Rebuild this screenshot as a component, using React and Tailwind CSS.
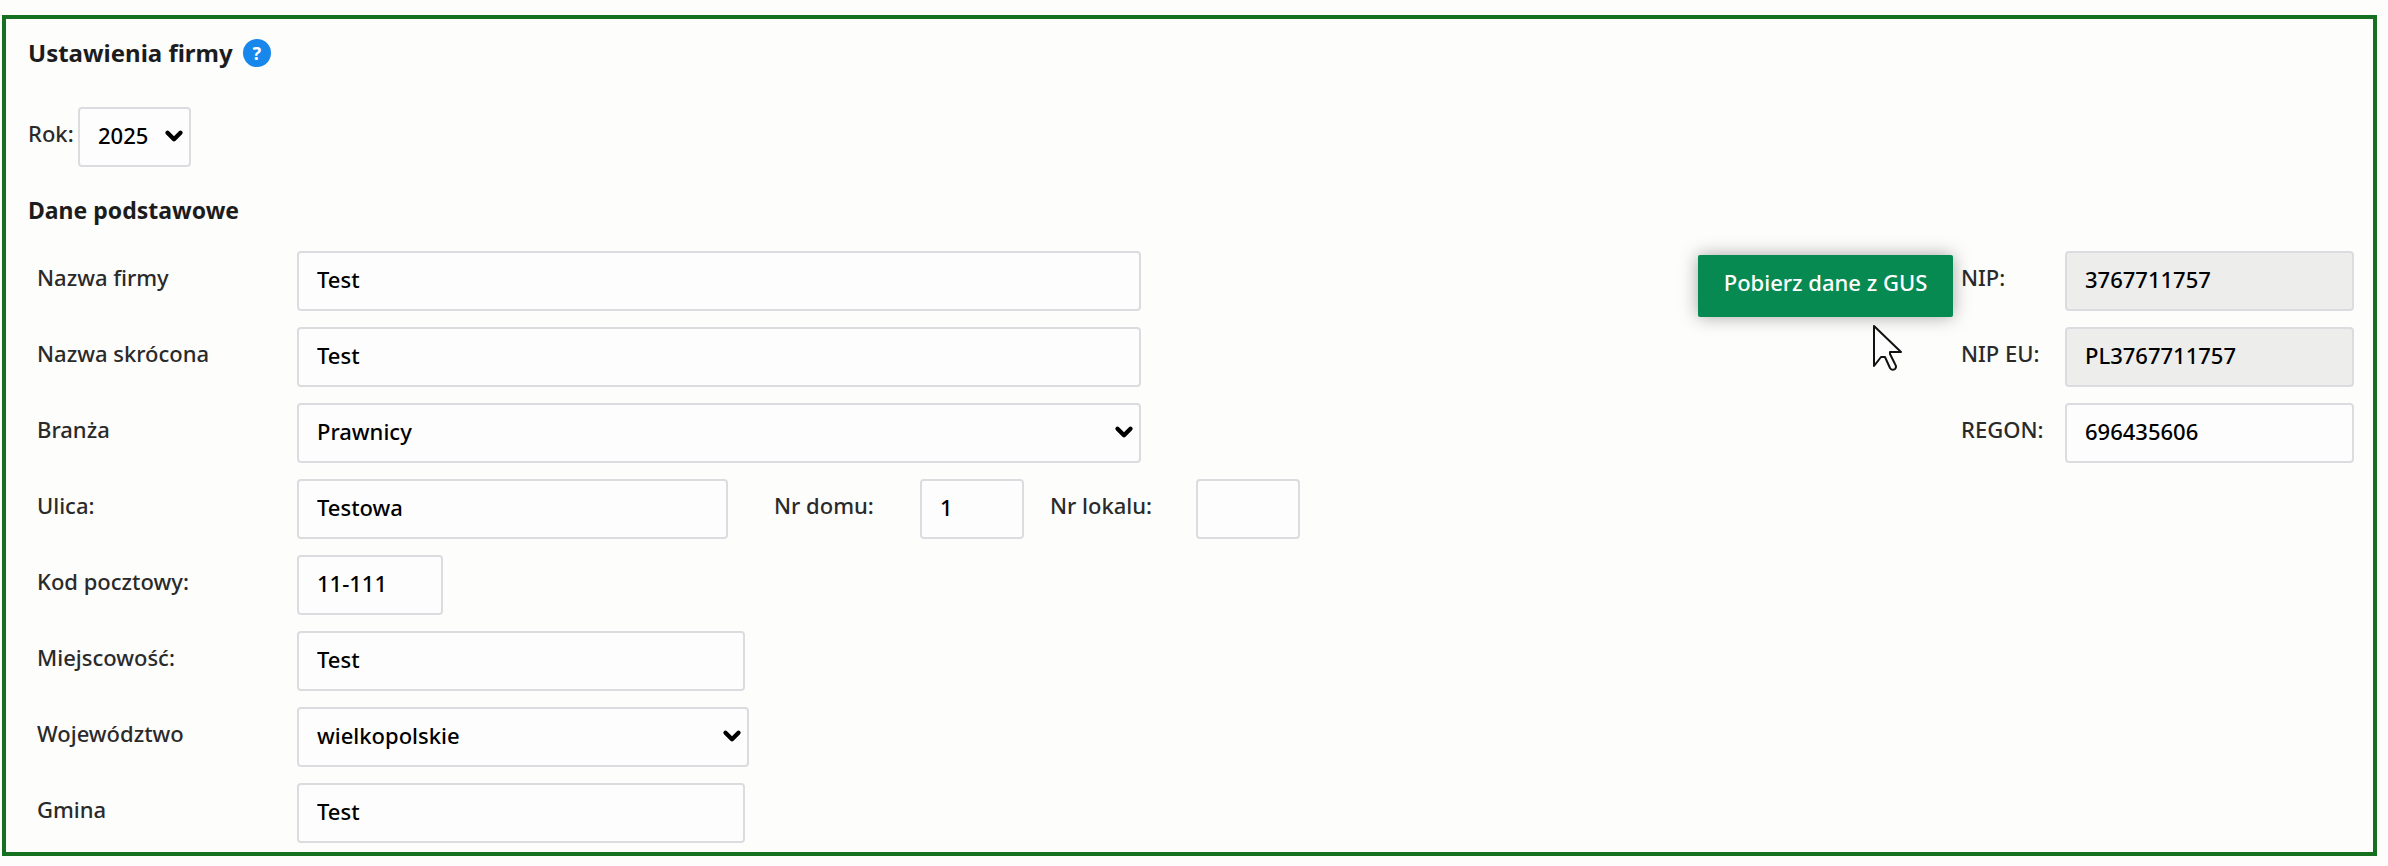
import { clsx as cn } from 'clsx';
import { ChevronDown } from 'lucide-react';

const CONTROL = 'h-[60px] rounded border-2 border-[#dcdce0] px-[18px] pb-1 text-[22px] font-medium text-black outline-none';

const COMPANY_FIELDS = [
  { id: 'name',      label: 'Nazwa firmy',    value: 'Test',          width: 'w-[844px]' },
  { id: 'shortName', label: 'Nazwa skrócona', value: 'Test',          width: 'w-[844px]' },
  { id: 'industry',  label: 'Branża',         value: 'Prawnicy',      width: 'w-[844px]', select: true },
  {
    id: 'street', label: 'Ulica:', value: 'Testowa', width: 'w-[431px]',
    extra: [
      { id: 'house', label: 'Nr domu:',   value: '1', labelWidth: 'ml-[46px] w-[146px]' },
      { id: 'flat',  label: 'Nr lokalu:', value: '',  labelWidth: 'ml-[26px] w-[146px]' },
    ],
  },
  { id: 'postcode',  label: 'Kod pocztowy:',  value: '11-111',        width: 'w-[146px]' },
  { id: 'city',      label: 'Miejscowość:',   value: 'Test',          width: 'w-[448px]' },
  { id: 'region',    label: 'Województwo',    value: 'wielkopolskie', width: 'w-[452px]', select: true },
  { id: 'commune',   label: 'Gmina',          value: 'Test',          width: 'w-[448px]' },
];

const REGISTRY_FIELDS = [
  { id: 'nip',   label: 'NIP:',    value: '3767711757',   readOnly: true },
  { id: 'nipEu', label: 'NIP EU:', value: 'PL3767711757', readOnly: true },
  { id: 'regon', label: 'REGON:',  value: '696435606' },
];

function Label({ id, className, children }) {
  return (
    <label htmlFor={id} className={cn('shrink-0 pb-2 text-[22px] font-medium text-[#2a2a2a]', className)}>
      {children}
    </label>
  );
}

function TextInput({ id, value, width, readOnly }) {
  return (
    <input
      id={id}
      type="text"
      defaultValue={value}
      readOnly={readOnly}
      className={cn(CONTROL, width, readOnly ? 'bg-[#ededeb]' : 'bg-[#fdfdfd]')}
    />
  );
}

function Select({ id, value, width }) {
  return (
    <div className={cn('relative', width)}>
      <select id={id} defaultValue={value} className={cn(CONTROL, 'w-full appearance-none bg-[#fdfdfd]')}>
        <option>{value}</option>
      </select>
      <ChevronDown size={26} strokeWidth={4} className="pointer-events-none absolute right-1 top-4 text-black" />
    </div>
  );
}

function CompanyRow({ id, label, value, width, select, extra = [] }) {
  return (
    <div className="flex items-center">
      <Label id={id} className="w-[260px]">{label}</Label>
      {select
        ? <Select id={id} value={value} width={width} />
        : <TextInput id={id} value={value} width={width} />}
      {extra.map(item => (
        <div key={item.id} className="flex items-center">
          <Label id={item.id} className={item.labelWidth}>{item.label}</Label>
          <TextInput id={item.id} value={item.value} width="w-[104px]" />
        </div>
      ))}
    </div>
  );
}

function Cursor() {
  return (
    <svg viewBox="0 0 32 48" className="pointer-events-none absolute left-[174px] top-[73px] h-12 w-8" aria-hidden="true">
      <path
        d="M2 2V42L9 33L13 33L18 44Q20 47 23 45Q25 43 23 40L18 30V28H29Z"
        fill="#fdfdfd" stroke="#111" strokeWidth="2" strokeLinejoin="round"
      />
    </svg>
  );
}

export default function App() {
  return (
    <div className="bg-[#fdfdfc] pt-[15px] pr-[11px] pb-[11px] pl-0.5 font-['Noto_Sans',sans-serif]">
      <main className="border-4 border-[#15701f] pt-3.5 pr-[19px] pb-[9px] pl-[22px]">
        <div className="flex h-10 items-center gap-2.5">
          <h1 className="text-2xl font-bold text-[#1c1c1c]">Ustawienia firmy</h1>
          <button
            type="button"
            aria-label="Pomoc"
            className="flex size-7 items-center justify-center rounded-full bg-[#1787ec] text-lg font-bold text-white"
          >
            ?
          </button>
        </div>

        <div className="mt-[34px] flex items-center">
          <Label id="year" className="w-[50px]">Rok:</Label>
          <Select id="year" value="2025" width="w-[113px]" />
        </div>

        <h2 className="mt-6 h-[60px] pt-0.5 text-[23px] font-bold text-[#1c1c1c]">Dane podstawowe</h2>

        <div className="flex items-start justify-between pl-[9px]">
          <div className="flex flex-col gap-4">
            {COMPANY_FIELDS.map(field => <CompanyRow key={field.id} {...field} />)}
          </div>

          <div className="flex items-start gap-2">
            <div className="relative pt-1">
              <button
                type="button"
                className="h-[62px] w-[255px] rounded-xs bg-[#078a52] pb-2 text-[22px] font-medium text-white shadow-[0_0_18px_rgba(0,0,0,0.35)]"
              >
                Pobierz dane z GUS
              </button>
              <Cursor />
            </div>
            <div className="flex flex-col gap-4">
              {REGISTRY_FIELDS.map(field => (
                <div key={field.id} className="flex items-center">
                  <Label id={field.id} className="w-[104px]">{field.label}</Label>
                  <TextInput {...field} width="w-[289px]" />
                </div>
              ))}
            </div>
          </div>
        </div>
      </main>
    </div>
  );
}
